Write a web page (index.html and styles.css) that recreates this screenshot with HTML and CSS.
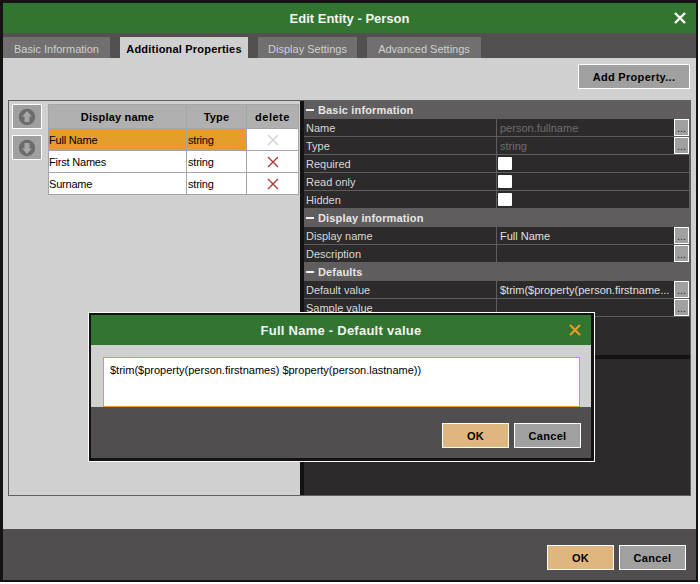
FILE: index.html
```html
<!DOCTYPE html>
<html lang="en">
<head>
    <meta charset="UTF-8">
    <title>Edit Entity - Person</title>
    <meta name="viewport" content="width=device-width, initial-scale=1.0">
    <link rel="stylesheet" href="styles.css">
</head>
<body>
    <div class="window">
        <div class="title-bar">
            <span></span>
            <span class="title">Edit Entity - Person</span>
            <svg class="close" width="12" height="12" viewBox="0 0 12 12"><path d="M1 1 11 11M11 1 1 11" stroke="#fff" stroke-width="2.4" fill="none"/></svg>
        </div>

        <div class="tabs">
            <div class="tab tab-basic">Basic Information</div>
            <div class="tab tab-props active">Additional Properties</div>
            <div class="tab tab-display">Display Settings</div>
            <div class="tab tab-advanced">Advanced Settings</div>
        </div>

        <div class="content">
            <div class="toolbar">
                <button class="btn btn-add">Add Property...</button>
            </div>

            <div class="panel">
                <div class="left-pane">
                    <div class="move-buttons">
                        <button class="move-btn">
                            <svg width="18" height="18" viewBox="0 0 18 18"><circle cx="9" cy="9" r="8.2" fill="#6b6b6b"/><path d="M9 3 14 8.5H11.5V14H6.5V8.5H4Z" fill="#a6a6a6"/></svg>
                        </button>
                        <button class="move-btn">
                            <svg width="18" height="18" viewBox="0 0 18 18"><circle cx="9" cy="9" r="8.2" fill="#6b6b6b"/><path d="M9 15 14 9.5H11.5V4H6.5V9.5H4Z" fill="#a6a6a6"/></svg>
                        </button>
                    </div>

                    <table class="prop-table">
                        <thead>
                            <tr><th class="col-name">Display name</th><th class="col-type">Type</th><th class="col-del">delete</th></tr>
                        </thead>
                        <tbody>
                            <tr class="selected">
                                <td>Full Name</td><td class="type">string</td>
                                <td class="del"><svg width="12" height="12" viewBox="0 0 12 12"><path d="M1 1 11 11M11 1 1 11" stroke="#cfcfcf" stroke-width="1.3" fill="none"/></svg></td>
                            </tr>
                            <tr>
                                <td>First Names</td><td class="type">string</td>
                                <td class="del"><svg width="12" height="12" viewBox="0 0 12 12"><path d="M1 1 11 11M11 1 1 11" stroke="#b23232" stroke-width="1.3" fill="none"/></svg></td>
                            </tr>
                            <tr>
                                <td>Surname</td><td class="type">string</td>
                                <td class="del"><svg width="12" height="12" viewBox="0 0 12 12"><path d="M1 1 11 11M11 1 1 11" stroke="#b23232" stroke-width="1.3" fill="none"/></svg></td>
                            </tr>
                        </tbody>
                    </table>
                </div>

                <div class="right-pane">
                    <div class="grid">
                        <div class="group"><span class="dash"></span>Basic information</div>
                        <div class="row"><div class="label">Name</div><div class="value muted">person.fullname<button class="more">...</button></div></div>
                        <div class="row"><div class="label">Type</div><div class="value muted">string<button class="more">...</button></div></div>
                        <div class="row"><div class="label">Required</div><div class="value"><span class="check"></span></div></div>
                        <div class="row"><div class="label">Read only</div><div class="value"><span class="check"></span></div></div>
                        <div class="row"><div class="label">Hidden</div><div class="value"><span class="check"></span></div></div>
                        <div class="group"><span class="dash"></span>Display information</div>
                        <div class="row"><div class="label">Display name</div><div class="value">Full Name<button class="more">...</button></div></div>
                        <div class="row"><div class="label">Description</div><div class="value"><button class="more">...</button></div></div>
                        <div class="group"><span class="dash"></span>Defaults</div>
                        <div class="row"><div class="label">Default value</div><div class="value">$trim($property(person.firstname...<button class="more">...</button></div></div>
                        <div class="row"><div class="label">Sample value</div><div class="value"><button class="more">...</button></div></div>
                    </div>
                    <div class="help-box"></div>
                </div>
            </div>
        </div>

        <div class="footer">
            <button class="btn btn-ok">OK</button>
            <button class="btn">Cancel</button>
        </div>

        <div class="dialog">
            <div class="dialog-inner">
                <div class="title-bar dialog-title">
                    <span></span>
                    <span class="title">Full Name - Default value</span>
                    <svg class="close" width="12" height="12" viewBox="0 0 12 12"><path d="M1 1 11 11M11 1 1 11" stroke="#e69c28" stroke-width="2.2" fill="none"/></svg>
                </div>
                <div class="dialog-body">
                    <div class="editor">$trim($property(person.firstnames) $property(person.lastname))</div>
                </div>
                <div class="footer dialog-footer">
                    <button class="btn btn-ok">OK</button>
                    <button class="btn">Cancel</button>
                </div>
            </div>
        </div>
    </div>
</body>
</html>
```

FILE: styles.css
```css
body {
    margin: 0;
    background: #fff;
    font-family: "Liberation Sans", Arial, sans-serif;
    font-size: 11px;
    color: #000;
}

.window {
    position: relative;
    box-sizing: border-box;
    width: 698px;
    height: 582px;
    display: flex;
    flex-direction: column;
    background: #141213;
    border-style: solid;
    border-color: #141213;
    border-width: 3px 2px 2px 3px;
}

/* title bars */
.title-bar {
    height: 30px;
    flex: none;
    display: grid;
    grid-template-columns: 1fr auto 1fr;
    align-items: center;
    background: #317531;
    color: #f4f4f4;
    padding-right: 10px;
    padding-left: 10px;
}

.title {
    font-size: 13px;
    font-weight: bold;
}

.dialog-title .title {
    letter-spacing: 0.25px;
}

.close {
    justify-self: end;
}

/* tabs */
.tabs {
    height: 25px;
    flex: none;
    box-sizing: border-box;
    display: flex;
    gap: 10px;
    padding-top: 4px;
    background: #535051;
}

.tab {
    height: 21px;
    line-height: 24px;
    text-align: center;
    background: #716f70;
    color: #cfcfcf;
}

.tab-basic { width: 107px; }
.tab-props { width: 128px; }
.tab-display { width: 99px; }
.tab-advanced { width: 114px; }

.tab.active {
    background: #d0d0d0;
    color: #000;
    font-weight: bold;
    letter-spacing: 0.2px;
}

/* main area */
.content {
    flex: 1;
    background: #d0d0d0;
    padding: 6px 5px 0;
}

.toolbar {
    display: flex;
    justify-content: flex-end;
    padding-right: 1px;
    margin-bottom: 11px;
}

.btn {
    width: 67px;
    height: 25px;
    box-sizing: border-box;
    border: 1px solid #fff;
    background: #a0a0a0;
    color: #000;
    font-family: inherit;
    font-size: 11px;
    font-weight: bold;
    letter-spacing: 0.3px;
    padding: 0;
}

.btn-add {
    width: 112px;
}

.btn-ok {
    background: #dfb77e;
}

.panel {
    height: 396px;
    box-sizing: border-box;
    display: flex;
    border: 1px solid #5f5f5f;
}

.left-pane {
    width: 291px;
    flex: none;
    display: flex;
    align-items: flex-start;
    gap: 6px;
    padding: 3px 0 0 3px;
    box-sizing: border-box;
}

.move-buttons {
    display: flex;
    flex-direction: column;
    gap: 6px;
}

.move-btn {
    width: 30px;
    height: 25px;
    box-sizing: border-box;
    border: 1px solid #fff;
    background: #a0a0a0;
    padding: 0;
    display: flex;
    align-items: center;
    justify-content: center;
}

.prop-table {
    width: 251px;
    table-layout: fixed;
    border-collapse: collapse;
    border: 1px solid #a5a5a5;
}

.prop-table th,
.prop-table td {
    border: 1px solid #a5a5a5;
    padding: 0;
}

.prop-table th {
    height: 23px;
    background: #b0b0b0;
    text-align: center;
    letter-spacing: 0.2px;
}

.prop-table th.col-del {
    letter-spacing: 0.5px;
}

.prop-table td {
    height: 21px;
    background: #fff;
    letter-spacing: -0.2px;
}

.prop-table td.type {
    padding-left: 1px;
}

.prop-table .selected td {
    background: #e69c28;
}

.prop-table .selected td.del,
.prop-table td.del {
    background: #fff;
    text-align: center;
}

.del svg {
    display: block;
    margin: 0 auto;
}

.col-name { width: 137px; }
.col-type { width: 59px; }

/* property grid */
.right-pane {
    flex: 1;
    display: flex;
    flex-direction: column;
    border-left: 4px solid #141213;
    background: #2d2a2b;
    color: #d8d8d8;
}

.grid {
    height: 258px;
    flex: none;
    box-sizing: border-box;
    border-bottom: 4px solid #141213;
}

.group {
    height: 18px;
    line-height: 19px;
    display: flex;
    align-items: center;
    background: #5f5d5e;
    color: #e6e6e6;
    font-weight: bold;
    letter-spacing: 0.15px;
    padding-left: 2px;
}

.dash {
    width: 8px;
    height: 2px;
    margin-right: 4px;
    background: #f0f0f0;
}

.row {
    height: 18px;
    box-sizing: border-box;
    display: flex;
    border-bottom: 1px solid #5f5d5e;
    border-right: 1px solid #5f5d5e;
    line-height: 19px;
}

.label {
    width: 192px;
    flex: none;
    padding-left: 2px;
    box-sizing: border-box;
}

.value {
    flex: 1;
    display: flex;
    align-items: center;
    border-left: 1px solid #5f5d5e;
    padding-left: 3px;
    padding-top: 1px;
    color: #e0e0e0;
}

.value.muted {
    color: #6f6d6e;
}

.more {
    margin-left: auto;
    margin-top: -1px;
    width: 15px;
    height: 17px;
    box-sizing: border-box;
    border: 1px solid #fff;
    background: #a0a0a0;
    color: #222;
    font-family: inherit;
    font-size: 11px;
    line-height: 17px;
    padding: 0;
    text-align: center;
}

.check {
    width: 14px;
    height: 13px;
    margin-top: -1px;
    margin-left: -2px;
    background: #fff;
    border-radius: 1px;
}

.help-box {
    flex: 1;
}

/* footers */
.footer {
    height: 51px;
    flex: none;
    box-sizing: border-box;
    display: flex;
    justify-content: flex-end;
    gap: 5px;
    padding: 16px 10px 0 0;
    background: #504e4f;
}

/* popup */
.dialog {
    position: absolute;
    left: 85px;
    top: 309px;
    width: 507px;
    height: 150px;
    box-sizing: border-box;
    border: 1px solid #fff;
}

.dialog-inner {
    height: 100%;
    box-sizing: border-box;
    display: flex;
    flex-direction: column;
    border-style: solid;
    border-color: #141213;
    border-width: 2px 3px 3px 2px;
}

.dialog-body {
    height: 62px;
    flex: none;
    box-sizing: border-box;
    padding: 12px 11px 0 12px;
    background: #d0d0d0;
}

.editor {
    height: 50px;
    box-sizing: border-box;
    border: 1px solid #e69c28;
    background: #fff;
    padding: 5px 6px;
    line-height: 14px;
}
```
